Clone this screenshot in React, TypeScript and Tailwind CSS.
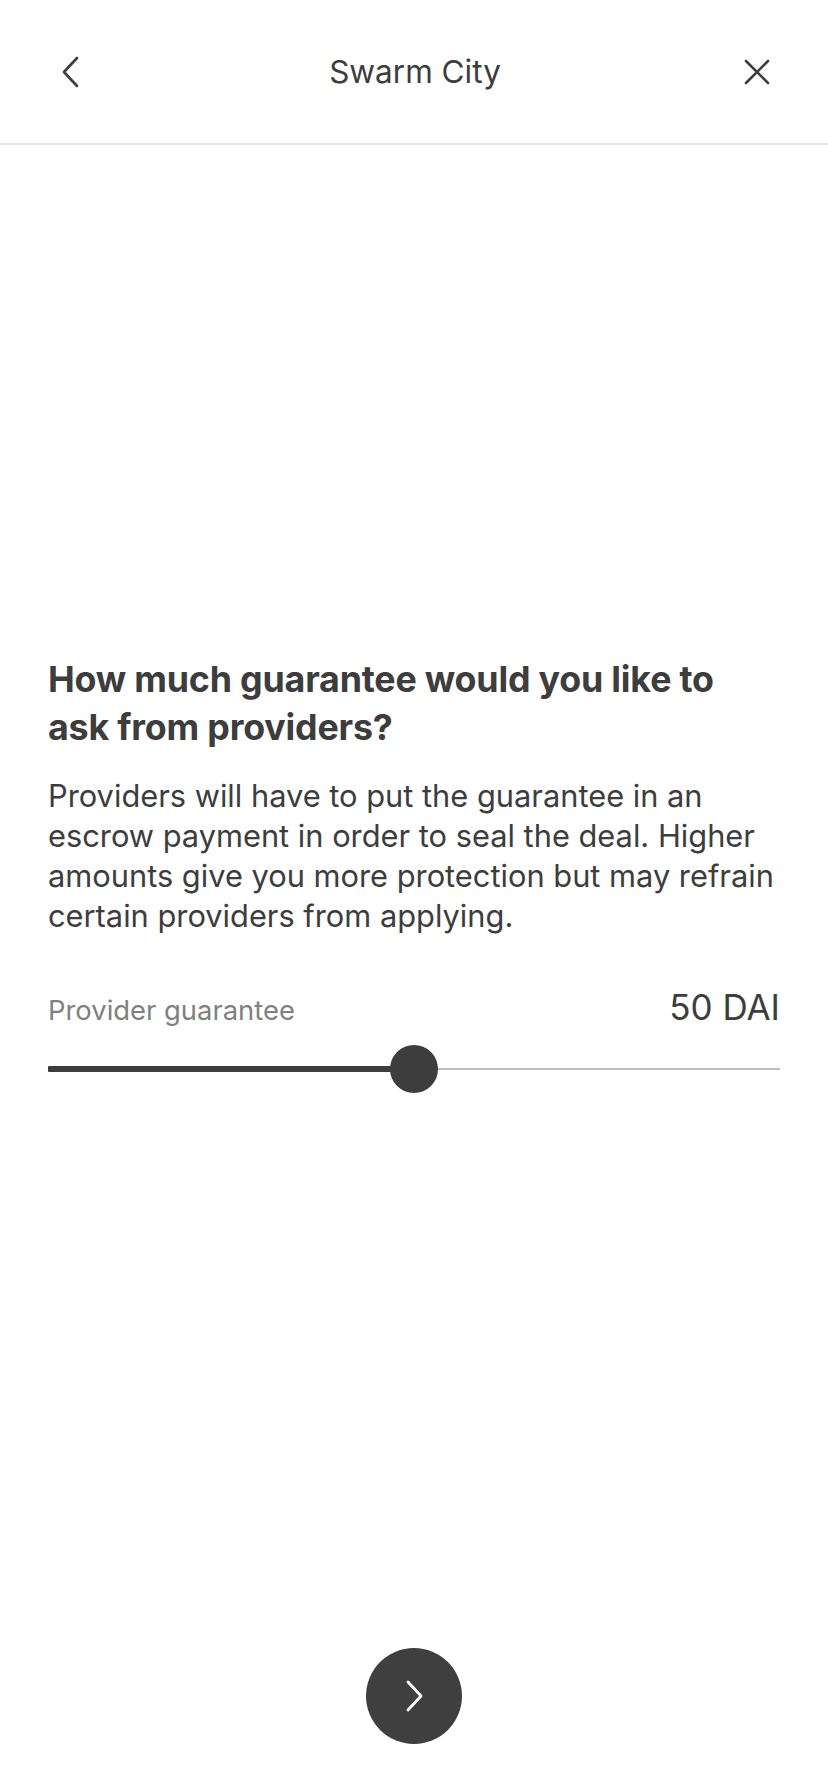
import React from "react";

export default function App() {
  const font = { fontFamily: "Inter, 'Noto Sans', sans-serif" };
  return (
    <div className="w-[828px] h-[1792px] bg-white flex flex-col text-[#3d3d3d]" style={font}>
      <header className="h-[145px] shrink-0 border-b-2 border-[#e6e6e6] flex items-center justify-between pl-[60px] pr-[58px]">
        <button className="w-[30px] h-[36px] flex items-center justify-start">
          <svg width="20" height="32" viewBox="0 0 20 32" fill="none">
            <path d="M17 2 L4 16 L17 30" stroke="#3d3d3d" strokeWidth="2.6" strokeLinecap="round" strokeLinejoin="round" />
          </svg>
        </button>
        <h1 className="text-[31.5px] leading-none font-normal text-[#3d3d3d]">Swarm City</h1>
        <button className="w-[30px] h-[36px] flex items-center justify-end">
          <svg width="26" height="26" viewBox="0 0 26 26" fill="none">
            <path d="M2 2 L24 24 M24 2 L2 24" stroke="#3d3d3d" strokeWidth="2.6" strokeLinecap="round" />
          </svg>
        </button>
      </header>

      <main className="flex-1 px-[48px] pt-[510px]">
        <h2 className="text-[35.8px] leading-[48px] font-bold text-[#3d3d3d] tracking-[-0.2px]">
          How much guarantee would you like to
          <br />
          ask from providers?
        </h2>
        <p className="mt-[25px] text-[30.8px] leading-[40px] text-[#3d3d3d]">
          Providers will have to put the guarantee in an
          <br />
          escrow payment in order to seal the deal. Higher
          <br />
          amounts give you more protection but may refrain
          <br />
          certain providers from applying.
        </p>
        <div className="mt-[54px] flex items-center justify-between">
          <span className="text-[27.4px] leading-[40px] text-[#808080]">Provider guarantee</span>
          <span className="text-[35px] leading-[40px] text-[#3d3d3d] -mt-[6px]">50 DAI</span>
        </div>
        <div className="relative mt-[15px] h-[48px] flex items-center">
          <div className="h-[6px] bg-[#3d3d3d] w-[370px] rounded-l-[1px]" />
          <div className="h-[2px] bg-[#bdbdbd] flex-1" />
          <div className="absolute left-[342px] top-0 w-[48px] h-[48px] rounded-full bg-[#3d3d3d]" />
        </div>
      </main>

      <div className="flex justify-center pb-[48px]">
        <button className="w-[96px] h-[96px] rounded-full bg-[#3f3f3f] flex items-center justify-center">
          <svg width="22" height="34" viewBox="0 0 22 34" fill="none" className="ml-[2px]">
            <path d="M4 3 L17 17 L4 31" stroke="#ffffff" strokeWidth="2.8" strokeLinecap="round" strokeLinejoin="round" />
          </svg>
        </button>
      </div>
    </div>
  );
}
